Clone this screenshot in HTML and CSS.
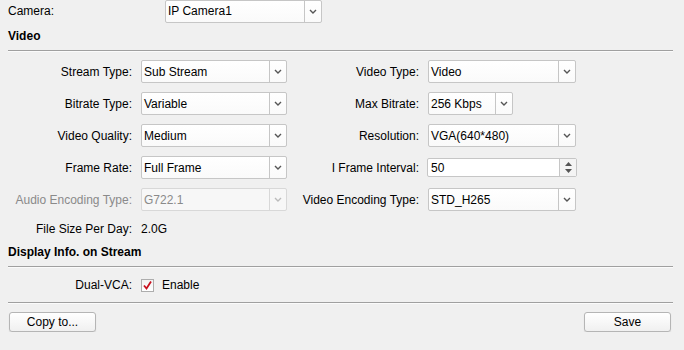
FILE: index.html
```html
<!DOCTYPE html>
<html>
<head>
<meta charset="utf-8">
<link rel="stylesheet" href="styles.css">
</head>
<body>
<div class="page">
  <div class="camera-row">
    <span class="camera-label">Camera:</span>
    <div class="select camera-select"><span class="val">IP Camera1</span><span class="arrow"><svg width="8" height="5" viewBox="0 0 8 5"><path d="M1 1 L4 4 L7 1" fill="none" stroke="#555" stroke-width="1.4"/></svg></span></div>
  </div>
  <div class="section-title">Video</div>
  <div class="divider"></div>
  <div class="grid">
    <label class="lbl">Stream Type:</label>
    <div class="select"><span class="val">Sub Stream</span><span class="arrow"><svg width="8" height="5" viewBox="0 0 8 5"><path d="M1 1 L4 4 L7 1" fill="none" stroke="#555" stroke-width="1.4"/></svg></span></div>
    <label class="lbl">Video Type:</label>
    <div class="select"><span class="val">Video</span><span class="arrow"><svg width="8" height="5" viewBox="0 0 8 5"><path d="M1 1 L4 4 L7 1" fill="none" stroke="#555" stroke-width="1.4"/></svg></span></div>

    <label class="lbl">Bitrate Type:</label>
    <div class="select"><span class="val">Variable</span><span class="arrow"><svg width="8" height="5" viewBox="0 0 8 5"><path d="M1 1 L4 4 L7 1" fill="none" stroke="#555" stroke-width="1.4"/></svg></span></div>
    <label class="lbl">Max Bitrate:</label>
    <div class="select narrow"><span class="val">256 Kbps</span><span class="arrow"><svg width="8" height="5" viewBox="0 0 8 5"><path d="M1 1 L4 4 L7 1" fill="none" stroke="#555" stroke-width="1.4"/></svg></span></div>

    <label class="lbl">Video Quality:</label>
    <div class="select"><span class="val">Medium</span><span class="arrow"><svg width="8" height="5" viewBox="0 0 8 5"><path d="M1 1 L4 4 L7 1" fill="none" stroke="#555" stroke-width="1.4"/></svg></span></div>
    <label class="lbl">Resolution:</label>
    <div class="select"><span class="val">VGA(640*480)</span><span class="arrow"><svg width="8" height="5" viewBox="0 0 8 5"><path d="M1 1 L4 4 L7 1" fill="none" stroke="#555" stroke-width="1.4"/></svg></span></div>

    <label class="lbl">Frame Rate:</label>
    <div class="select"><span class="val">Full Frame</span><span class="arrow"><svg width="8" height="5" viewBox="0 0 8 5"><path d="M1 1 L4 4 L7 1" fill="none" stroke="#555" stroke-width="1.4"/></svg></span></div>
    <label class="lbl">I Frame Interval:</label>
    <div class="spin"><span class="val">50</span><span class="spin-btns"><svg width="7" height="4" viewBox="0 0 7 4"><path d="M0 4 L3.5 0 L7 4 Z" fill="#555"/></svg><svg width="7" height="4" viewBox="0 0 7 4"><path d="M0 0 L3.5 4 L7 0 Z" fill="#555"/></svg></span></div>

    <label class="lbl disabled">Audio Encoding Type:</label>
    <div class="select is-disabled"><span class="val">G722.1</span><span class="arrow"><svg width="8" height="5" viewBox="0 0 8 5"><path d="M1 1 L4 4 L7 1" fill="none" stroke="#bbb" stroke-width="1.4"/></svg></span></div>
    <label class="lbl">Video Encoding Type:</label>
    <div class="select"><span class="val">STD_H265</span><span class="arrow"><svg width="8" height="5" viewBox="0 0 8 5"><path d="M1 1 L4 4 L7 1" fill="none" stroke="#555" stroke-width="1.4"/></svg></span></div>

    <label class="lbl short">File Size Per Day:</label>
    <div class="plain short">2.0G</div>
  </div>
  <div class="section-title second">Display Info. on Stream</div>
  <div class="divider"></div>
  <div class="vca-row">
    <label class="lbl">Dual-VCA:</label>
    <div class="check-wrap">
      <span class="checkbox"><svg width="11" height="11" viewBox="0 0 11 11"><path d="M2 5.5 L4.5 8.5 L9 1.5" fill="none" stroke="#c8101e" stroke-width="1.8"/></svg></span>
      <span class="check-text">Enable</span>
    </div>
  </div>
  <div class="divider"></div>
  <div class="btn-row">
    <button class="btn">Copy to...</button>
    <button class="btn">Save</button>
  </div>
</div>
</body>
</html>
```

FILE: styles.css
```css
html, body {
  margin: 0;
  padding: 0;
  background: #f0f0f0;
}
body {
  font-family: "Liberation Sans", Arial, sans-serif;
  font-size: 12px;
  color: #000;
}
.page {
  padding: 0 11px 0 8px;
}
.camera-row {
  display: flex;
  align-items: center;
  height: 22px;
}
.camera-label {
  width: 157px;
}
.camera-select {
  width: 157px;
  height: 22px;
}
.select {
  box-sizing: border-box;
  height: 23px;
  border: 1px solid #c6c6c6;
  border-radius: 2px;
  background: linear-gradient(#ffffff, #fafafa);
  display: flex;
  align-items: center;
}
.select .val {
  flex: 1;
  padding-left: 2px;
  white-space: nowrap;
}
.select .arrow {
  width: 16px;
  height: 100%;
  border-left: 1px solid #c6c6c6;
  display: flex;
  align-items: center;
  justify-content: center;
}
.select.narrow {
  width: 85px;
}
.select.is-disabled {
  border-color: #d8d8d8;
  background: #f7f7f7;
  color: #8a8a8a;
}
.select.is-disabled .arrow {
  border-left-color: #d8d8d8;
}
.section-title {
  font-weight: bold;
  height: 14px;
  line-height: 14px;
  margin-top: 7px;
}
.divider {
  height: 1px;
  background: #a0a0a0;
  border-bottom: 1px solid #fbfbfb;
  margin-top: 7px;
}
.grid {
  display: grid;
  grid-template-columns: 124px 146px 123px 148px;
  column-gap: 9px;
  row-gap: 9px;
  padding-top: 8px;
  align-items: center;
}
.lbl {
  text-align: right;
  white-space: nowrap;
}
.lbl.disabled {
  color: #8a8a8a;
}
.short {
  height: 18px;
  line-height: 18px;
}
.spin {
  box-sizing: border-box;
  height: 19px;
  width: 150px;
  margin-left: -1px;
  border: 1px solid #c6c6c6;
  border-radius: 2px;
  background: #fff;
  display: flex;
  align-items: center;
}
.spin .val {
  flex: 1;
  padding-left: 3px;
}
.spin-btns {
  width: 16px;
  height: 100%;
  border-left: 1px solid #c6c6c6;
  background: #f4f4f4;
  display: flex;
  flex-direction: column;
  align-items: center;
  justify-content: center;
  gap: 3px;
}
.vca-row {
  display: flex;
  align-items: center;
  height: 18px;
  margin-top: 8px;
  margin-bottom: 8px;
}
.vca-row .lbl {
  width: 124px;
  margin-right: 9px;
}
.check-wrap {
  display: flex;
  align-items: center;
}
.checkbox {
  box-sizing: border-box;
  width: 13px;
  height: 13px;
  border: 1px solid #adadad;
  background: linear-gradient(#f2f2f2, #ffffff);
  display: flex;
  align-items: center;
  justify-content: center;
  margin-right: 8px;
}
.btn-row {
  display: flex;
  justify-content: space-between;
  padding: 8px 2px 0 1px;
}
.btn {
  box-sizing: border-box;
  width: 87px;
  height: 20px;
  font-family: "Liberation Sans", Arial, sans-serif;
  font-size: 12px;
  color: #000;
  border: 1px solid #b5b5b5;
  border-radius: 3px;
  background: linear-gradient(#ffffff, #f0f0f0);
  box-shadow: 0 1px 1px rgba(0,0,0,0.12);
  padding: 0;
}
```
